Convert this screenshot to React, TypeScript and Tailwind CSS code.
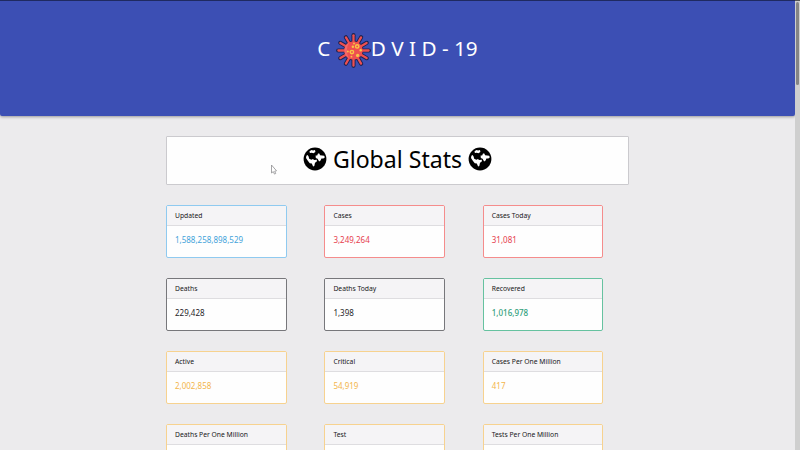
type Stat = { label: string; value: string; border: string; color: string };

const blue = { border: "border-[#8fcaf0]", color: "text-[#43a3da]" };
const red = { border: "border-[#f58c8c]", color: "text-[#e63d4d]" };
const dark = { border: "border-[#77777b]", color: "text-[#26262a]" };
const green = { border: "border-[#66c2a0]", color: "text-[#30a07c] font-medium" };
const amber = { border: "border-[#f7d28f]", color: "text-[#f3b54b]" };

const stats: Stat[] = [
  { label: "Updated", value: "1,588,258,898,529", ...blue },
  { label: "Cases", value: "3,249,264", ...red },
  { label: "Cases Today", value: "31,081", ...red },
  { label: "Deaths", value: "229,428", ...dark },
  { label: "Deaths Today", value: "1,398", ...dark },
  { label: "Recovered", value: "1,016,978", ...green },
  { label: "Active", value: "2,002,858", ...amber },
  { label: "Critical", value: "54,919", ...amber },
  { label: "Cases Per One Million", value: "417", ...amber },
  { label: "Deaths Per One Million", value: "", ...amber },
  { label: "Test", value: "", ...amber },
  { label: "Tests Per One Million", value: "", ...amber },
];

const spikes = [0, 30, 60, 90, 120, 150, 180, 210, 240, 270, 300, 330];

function Virus() {
  return (
    <svg viewBox="-17 -17 34 34" className="h-[35px] w-[35px] shrink-0" strokeLinecap="round">
      {spikes.map((a) => (
        <g key={a} transform={`rotate(${a})`} stroke="#1c2251" strokeWidth="4">
          <path d="M0-8V-14.9" />
        </g>
      ))}
      <circle r="9.6" fill="#1c2251" />
      {spikes.map((a) => (
        <g key={a} transform={`rotate(${a})`} stroke="#ee4f50" strokeWidth="2.2">
          <path d="M0-7V-14.7" />
        </g>
      ))}
      <circle r="9" fill="#ee4f50" />
      <path d="M-4-8A9 9 0 0 0-4 8A14 14 0 0 1-4-8" fill="#f2696a" />
      <g fill="none" stroke="#f8c545" strokeWidth="1.4">
        <circle cx="3.6" cy="-4" r="1.6" />
        <circle cx="-1.5" cy="1.5" r="1.6" />
      </g>
      <g fill="#f8c545">
        <circle cx="-.6" cy="-3.6" r="1.2" />
        <circle cx="-5.5" cy="1" r=".9" />
        <circle cx="4" cy="4.8" r="1.6" />
        <circle cx="7" cy="-.2" r="1.2" />
        <circle cx="-2" cy="6" r=".9" />
        <circle cx=".5" cy="-6.8" r=".9" />
      </g>
    </svg>
  );
}

function Globe() {
  return (
    <svg viewBox="0 0 24 24" className="h-6 w-6 shrink-0">
      <circle cx="12" cy="12" r="11.4" fill="#000" />
      <g fill="#fff">
        <path d="M6.5 4.3 8.5 3l1.6.6L12 3l.4 1.9-2 1.4-1.6-.6-1.9.2z" />
        <path d="M12.6 8.6h1.6l.8-2.2h1.3l.8 1.9 4 .4.8 1.5-1.5 1.2-2 .1-.8 2-1.5 1-1.5-2.8-1.8-.6z" />
        <path d="M3.4 8.7 4.6 8 5.6 9.6l.6 2.2 2.2 1 1.6-.9 1 1.2 3-.3-.4 1.9-1.6 1-.7 3.2-1.2.6-1.3-3-2-.2-1.8-2.3L3 11z" />
      </g>
    </svg>
  );
}

function Card({ label, value, border, color }: Stat) {
  return (
    <article className={`h-[53px] overflow-hidden rounded-[2px] border bg-[#fefefe] ${border}`}>
      <h3 className="h-5 border-b border-[#dedde0] bg-[#f5f4f6] pl-2 text-[6.75px] leading-[20px] text-[#171719]">
        {label}
      </h3>
      <p className={`pl-2 pt-[7px] text-[8px] leading-[14px] ${color}`}>{value}</p>
    </article>
  );
}

export default function App() {
  return (
    <div className="flex h-[450px] w-[800px] overflow-hidden bg-[#ecebed] font-['Noto_Sans','Open_Sans',sans-serif]">
      <main className="w-[795px]">
        <header className="flex h-[116px] justify-center rounded-b-[2px] border-t border-[#1f2a61] bg-[#3c4fb4] pt-[31px] shadow-[0_1px_3px_rgba(0,0,0,0.35)]">
          <h1 className="flex h-[37px] items-center whitespace-pre text-[20.7px] leading-[31px] text-white">
            <span className="pb-1">C </span>
            <Virus />
            <span className="pb-1">D V I D - 19</span>
          </h1>
        </header>
        <section className="ml-[166px] mt-5 w-[463px]">
          <h2 className="flex h-[49px] items-center justify-center gap-[5.5px] rounded-[1px] border border-[#cbcace] bg-[#fefefe] pb-[3px] text-[23.1px] text-black">
            <Globe />
            <span>Global Stats</span>
            <Globe />
          </h2>
          <div className="mt-5 grid grid-cols-[121px_121px_120px] gap-x-[37.4px] gap-y-5">
            {stats.map((s) => (
              <Card key={s.label} {...s} />
            ))}
          </div>
        </section>
      </main>
      <aside className="flex w-[5px] justify-center border-t border-[#555] bg-[#cfcfcf] pt-px">
        <div className="h-[83px] w-[3px] rounded-full bg-[#858585]" />
      </aside>
      <svg viewBox="0 0 8 12" className="absolute left-[270px] top-[164px] h-3 w-2">
        <path d="M1.5 1v8l1.8-1.4 1.2 2.5 1.2-.6-1-2.3 1.8-.4z" fill="#fff" stroke="#8e8e90" strokeWidth=".8" />
      </svg>
    </div>
  );
}
